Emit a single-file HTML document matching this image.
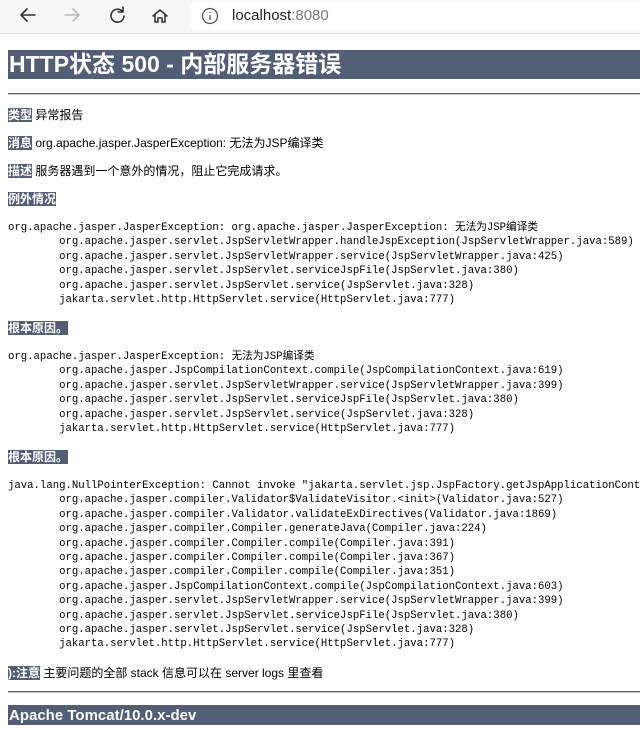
<!DOCTYPE html>
<html><head><meta charset="utf-8"><style>
body{margin:0;width:640px;height:731px;overflow:hidden;background:#fff;font-family:"Liberation Sans","Noto Sans CJK SC",sans-serif;color:#000;position:relative}
.bar{position:absolute;left:0;top:0;width:640px;height:33px;background:#f7f7f7;border-bottom:1px solid #ddd}
.url{position:absolute;left:190px;top:2px;width:460px;height:28px;background:#fff;border-radius:6px}
.a{position:absolute}
.t{position:absolute;left:8px;top:50px;width:632px;height:29px;background:#525D76;color:#fff;font-weight:bold;font-size:23px;line-height:29px;padding-left:1px}
.hr{position:absolute;left:8px;width:632px;height:1px;background:#525D76;border-bottom:1px solid #c8ccd6}
.p{position:absolute;left:8px;font-size:12px;line-height:14px;white-space:nowrap}
.l{background:#525D76;color:#fff;font-weight:bold}
pre{position:absolute;left:8px;margin:0;font-family:"Liberation Mono","Noto Sans CJK SC",monospace;font-size:10.65px;line-height:14.4px;white-space:pre}
.h3{position:absolute;left:8px;top:705px;width:632px;height:20px;background:#525D76;color:#fff;font-weight:bold;font-size:15px;line-height:22px;padding-left:1px}
</style></head><body>
<div class="bar"><div class="url"></div>
<svg class="a" style="left:0;top:0" width="190" height="33" fill="none" stroke-width="1.6" stroke-linecap="round" stroke-linejoin="round">
<path d="M35 15H21M27 9l-6 6 6 6" stroke="#333"/>
<path d="M79 15H65M73 9l6 6-6 6" stroke="#bbb"/>
<path d="M122 11a6.5 6.5 0 1 0 2 5M123 7v5h-5" stroke="#333"/>
<path d="M153 16l7-6 7 6M155 14v8h3v-4h4v4h3v-8" stroke="#333"/>
</svg>
<svg class="a" style="left:200px;top:6px" width="20" height="20" fill="none" stroke="#555" stroke-width="1.3"><circle cx="10" cy="10" r="7.5"/><path d="M10 9v5M10 6v1"/></svg>
<div class="a" style="left:232px;top:7px;font-size:15px;color:#222">localhost<span style="color:#777">:8080</span></div>
</div>
<div class="t">HTTP状态 500 - 内部服务器错误</div>
<div class="hr" style="top:93px"></div>
<div class="p" style="top:108px"><span class="l">类型</span> 异常报告</div>
<div class="p" style="top:136px"><span class="l">消息</span> org.apache.jasper.JasperException: 无法为JSP编译类</div>
<div class="p" style="top:164px"><span class="l">描述</span> 服务器遇到一个意外的情况，阻止它完成请求。</div>
<div class="p" style="top:192px"><span class="l">例外情况</span></div>
<pre style="top:221px">org.apache.jasper.JasperException: org.apache.jasper.JasperException: 无法为JSP编译类
	org.apache.jasper.servlet.JspServletWrapper.handleJspException(JspServletWrapper.java:589)
	org.apache.jasper.servlet.JspServletWrapper.service(JspServletWrapper.java:425)
	org.apache.jasper.servlet.JspServlet.serviceJspFile(JspServlet.java:380)
	org.apache.jasper.servlet.JspServlet.service(JspServlet.java:328)
	jakarta.servlet.http.HttpServlet.service(HttpServlet.java:777)</pre>
<div class="p" style="top:321px"><span class="l">根本原因。</span></div>
<pre style="top:350px">org.apache.jasper.JasperException: 无法为JSP编译类
	org.apache.jasper.JspCompilationContext.compile(JspCompilationContext.java:619)
	org.apache.jasper.servlet.JspServletWrapper.service(JspServletWrapper.java:399)
	org.apache.jasper.servlet.JspServlet.serviceJspFile(JspServlet.java:380)
	org.apache.jasper.servlet.JspServlet.service(JspServlet.java:328)
	jakarta.servlet.http.HttpServlet.service(HttpServlet.java:777)</pre>
<div class="p" style="top:450px"><span class="l">根本原因。</span></div>
<pre style="top:479px">java.lang.NullPointerException: Cannot invoke "jakarta.servlet.jsp.JspFactory.getJspApplicationContext
	org.apache.jasper.compiler.Validator$ValidateVisitor.&lt;init&gt;(Validator.java:527)
	org.apache.jasper.compiler.Validator.validateExDirectives(Validator.java:1869)
	org.apache.jasper.compiler.Compiler.generateJava(Compiler.java:224)
	org.apache.jasper.compiler.Compiler.compile(Compiler.java:391)
	org.apache.jasper.compiler.Compiler.compile(Compiler.java:367)
	org.apache.jasper.compiler.Compiler.compile(Compiler.java:351)
	org.apache.jasper.JspCompilationContext.compile(JspCompilationContext.java:603)
	org.apache.jasper.servlet.JspServletWrapper.service(JspServletWrapper.java:399)
	org.apache.jasper.servlet.JspServlet.serviceJspFile(JspServlet.java:380)
	org.apache.jasper.servlet.JspServlet.service(JspServlet.java:328)
	jakarta.servlet.http.HttpServlet.service(HttpServlet.java:777)</pre>
<div class="p" style="top:666px"><span class="l">):注意</span> 主要问题的全部 stack 信息可以在 server logs 里查看</div>
<div class="hr" style="top:691px"></div>
<div class="h3">Apache Tomcat/10.0.x-dev</div>
</body></html>
